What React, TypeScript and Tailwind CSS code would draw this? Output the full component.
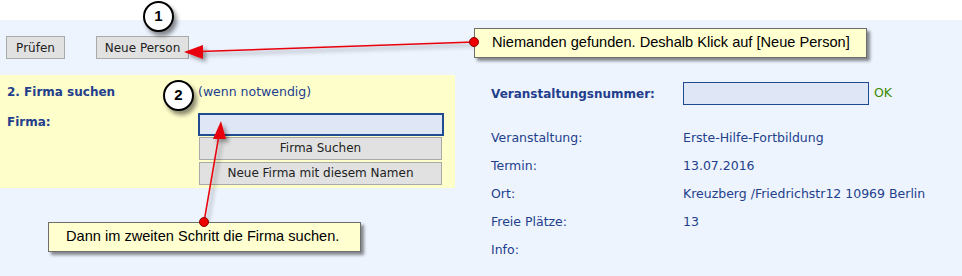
import React from 'react';

const rows: { label: string; value: string }[] = [
  { label: 'Veranstaltung:', value: 'Erste-Hilfe-Fortbildung' },
  { label: 'Termin:', value: '13.07.2016' },
  { label: 'Ort:', value: 'Kreuzberg /Friedrichstr12 10969 Berlin' },
  { label: 'Freie Plätze:', value: '13' },
  { label: 'Info:', value: '' },
];

const Step: React.FC<{ n: number; className: string }> = ({ n, className }) => (
  <div
    className={`absolute flex h-[31px] w-[31px] items-center justify-center rounded-full border-2 border-black bg-white text-[15px] font-bold text-black shadow-[3px_4px_4px_rgba(0,0,0,0.45)] ${className}`}
    style={{ fontFamily: '"Liberation Sans", Arial, sans-serif' }}
  >
    {n}
  </div>
);

const App: React.FC = () => {
  return (
    <div
      className="relative h-[276px] w-full overflow-hidden bg-white text-[12.5px] text-[#233f8c]"
      style={{ fontFamily: '"DejaVu Sans", Verdana, sans-serif' }}
    >
      {/* white strip on top */}
      <div className="h-5" />

      <div className="h-[256px] bg-[#edf4fe]">
        {/* Buttons */}
        <div className="flex gap-[31px] pl-[6px] pt-4">
          <button className="h-[23px] w-[59px] border border-[#a9a9a9] bg-[#e1e1e1] text-[12px] text-[#222]">
            Prüfen
          </button>
          <button className="h-[23px] w-[93px] border border-[#a9a9a9] bg-[#e1e1e1] text-[12px] text-[#222]">
            Neue Person
          </button>
        </div>

        <div className="mt-4 flex">
          {/* Firma suchen */}
          <div className="h-[113px] w-[455px] bg-[#fefecb] pl-[7px] pt-[8px]">
            <div className="flex">
              <div className="w-[191px] text-[12px] font-bold">2. Firma suchen</div>
              <div>(wenn notwendig)</div>
            </div>
            <div className="mt-[11px] flex">
              <div className="w-[191px] text-[12px] font-bold">Firma:</div>
              <div className="flex w-[246px] flex-col">
                <div className="h-[23px] w-[246px] border-2 border-[#1f4b91] bg-[#dfe7f6]" />
                <button className="mt-px ml-px h-[23px] w-[243px] border border-[#a9a9a9] bg-[#e1e1e1] text-[12px] text-[#222]">
                  Firma Suchen
                </button>
                <button className="mt-[2px] ml-px h-[23px] w-[243px] border border-[#a9a9a9] bg-[#e1e1e1] text-[12px] text-[#222]">
                  Neue Firma mit diesem Namen
                </button>
              </div>
            </div>
          </div>

          {/* Veranstaltung */}
          <div className="pl-[36px] pt-[7px]">
            <div className="flex items-center">
              <div className="w-[192px] text-[12px] font-bold">Veranstaltungsnummer:</div>
              <div className="h-[23px] w-[186px] border-[1.5px] border-[#1f4b91] bg-[#dfe7f6]" />
              <span className="ml-[5px] text-[#3c8a00]">OK</span>
            </div>
            <div className="mt-[25px] flex flex-col gap-[12px]">
              {rows.map((r) => (
                <div key={r.label} className="flex h-[16px] items-center">
                  <div className="w-[192px]">{r.label}</div>
                  <div>{r.value}</div>
                </div>
              ))}
            </div>
          </div>
        </div>
      </div>

      {/* Annotations */}
      <svg className="pointer-events-none absolute left-0 top-0" width="962" height="276">
        <defs>
          <filter id="sh" x="-50%" y="-50%" width="200%" height="200%">
            <feDropShadow dx="3" dy="3" stdDeviation="2" floodColor="#000" floodOpacity="0.4" />
          </filter>
        </defs>
        <g filter="url(#sh)">
          <line x1="474" y1="42" x2="200" y2="51.5" stroke="#e8000b" strokeWidth="1.5" />
          <polygon points="184,52 203,45 203,59" fill="#e8000b" />
          <line x1="204" y1="222" x2="219" y2="135" stroke="#e8000b" strokeWidth="1.5" />
          <polygon points="221,121 213,139 226,139" fill="#e8000b" />
        </g>
      </svg>

      <div
        className="absolute left-[474px] top-[28px] flex h-[30px] w-[393px] items-center border border-[#6e6e6e] bg-[#ffffd0] pl-[17px] text-[14.6px] text-black shadow-[3px_3px_3px_rgba(0,0,0,0.45)]"
        style={{ fontFamily: '"Liberation Sans", Arial, sans-serif' }}
      >
        Niemanden gefunden. Deshalb Klick auf [Neue Person]
      </div>
      <div
        className="absolute left-[48px] top-[222px] flex h-[30px] w-[313px] items-center border border-[#6e6e6e] bg-[#ffffd0] pl-[17px] text-[14.6px] text-black shadow-[3px_3px_3px_rgba(0,0,0,0.45)]"
        style={{ fontFamily: '"Liberation Sans", Arial, sans-serif' }}
      >
        Dann im zweiten Schritt die Firma suchen.
      </div>

      <svg className="pointer-events-none absolute left-0 top-0" width="962" height="276">
        <circle cx="474" cy="42" r="4.5" fill="#ee0000" stroke="#8a0000" strokeWidth="1" />
        <circle cx="204" cy="222" r="4.5" fill="#ee0000" stroke="#8a0000" strokeWidth="1" />
      </svg>

      <Step n={1} className="left-[143px] top-[1px]" />
      <Step n={2} className="left-[163px] top-[80px]" />
    </div>
  );
};

export default App;
